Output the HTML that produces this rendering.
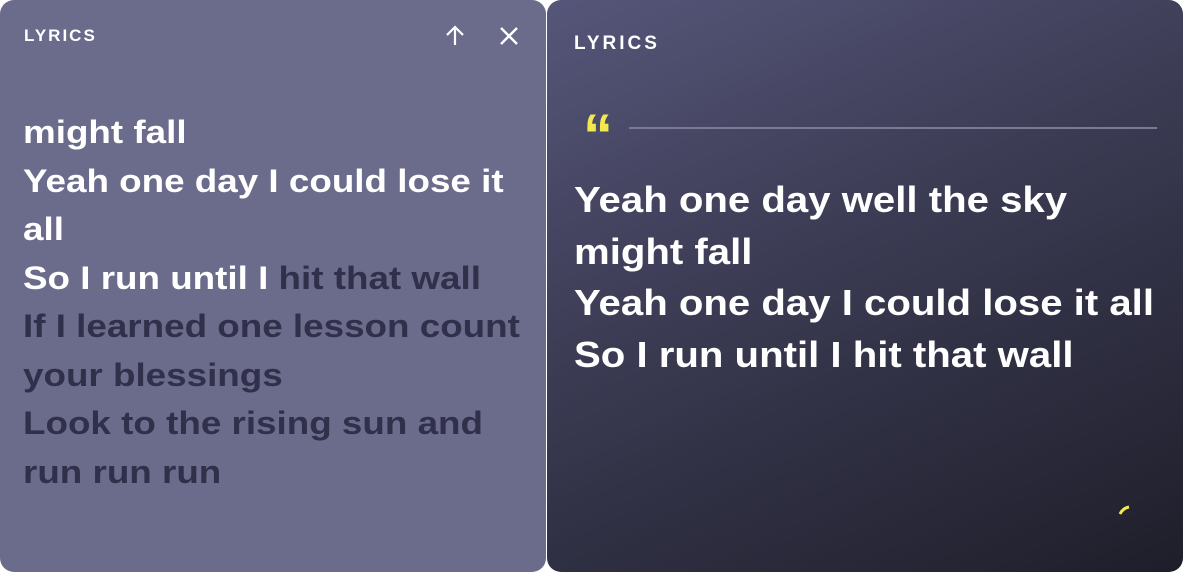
<!DOCTYPE html>
<html><head><style>
html,body{margin:0;padding:0;width:1183px;height:572px;background:#fff;overflow:hidden;font-family:"Liberation Sans",sans-serif;}
.l{position:absolute;left:0;top:0;width:546px;height:572px;background:#6b6b8b;border-radius:14px;}
.r{position:absolute;left:547px;top:0;width:636px;height:572px;border-radius:14px;background:linear-gradient(155deg,#56567a 0%,#3a3a52 45%,#1e1e2a 100%);}
.h{position:absolute;color:#fff;font-weight:bold;letter-spacing:2px;}
.t{position:absolute;font-weight:bold;white-space:nowrap;color:#fff;transform-origin:0 0;}
.d{color:#30304a;}
.t div{height:48.5px;}
.r .t div{height:51.5px;}
</style></head><body>
<div class="l">
 <div class="h" style="left:24px;top:26px;font-size:17px;">LYRICS</div>
 <svg style="position:absolute;left:443px;top:24px" width="24" height="24" viewBox="0 0 24 24"><path d="M12 21V3M4 11l8-8 8 8" stroke="#fff" stroke-width="2.2" fill="none"/></svg>
 <svg style="position:absolute;left:498px;top:25px" width="22" height="22" viewBox="0 0 22 22"><path d="M3 3l16 16M19 3L3 19" stroke="#fff" stroke-width="2.4" fill="none"/></svg>
 <div class="t" style="left:23px;top:108px;font-size:32px;line-height:48.5px;transform:scaleX(1.15);">
  <div>might fall</div>
  <div>Yeah one day I could lose it</div>
  <div>all</div>
  <div>So I run until I <span class="d">hit that wall</span></div>
  <div class="d">If I learned one lesson count</div>
  <div class="d">your blessings</div>
  <div class="d">Look to the rising sun and</div>
  <div class="d">run run run</div>
 </div>
</div>
<div class="r">
 <div class="h" style="left:27px;top:33px;font-size:19px;letter-spacing:3px;">LYRICS</div>
 <div style="position:absolute;left:36px;top:108px;color:#f2e94e;font-size:60px;font-weight:bold;line-height:56px;font-family:'Liberation Sans',sans-serif;">“</div>
 <div style="position:absolute;left:82px;top:127px;width:528px;height:2px;background:#7a7a94;"></div>
 <div class="t" style="left:27px;top:174px;font-size:36px;line-height:51.5px;transform:scaleX(1.115);">
  <div>Yeah one day well the sky</div>
  <div>might fall</div>
  <div>Yeah one day I could lose it all</div>
  <div>So I run until I hit that wall</div>
 </div>
 <svg style="position:absolute;left:570px;top:500px" width="20" height="20" viewBox="0 0 20 20"><path d="M3 14Q6 8 12 7" stroke="#f2e94e" stroke-width="3" fill="none"/></svg>
</div>
</body></html>
